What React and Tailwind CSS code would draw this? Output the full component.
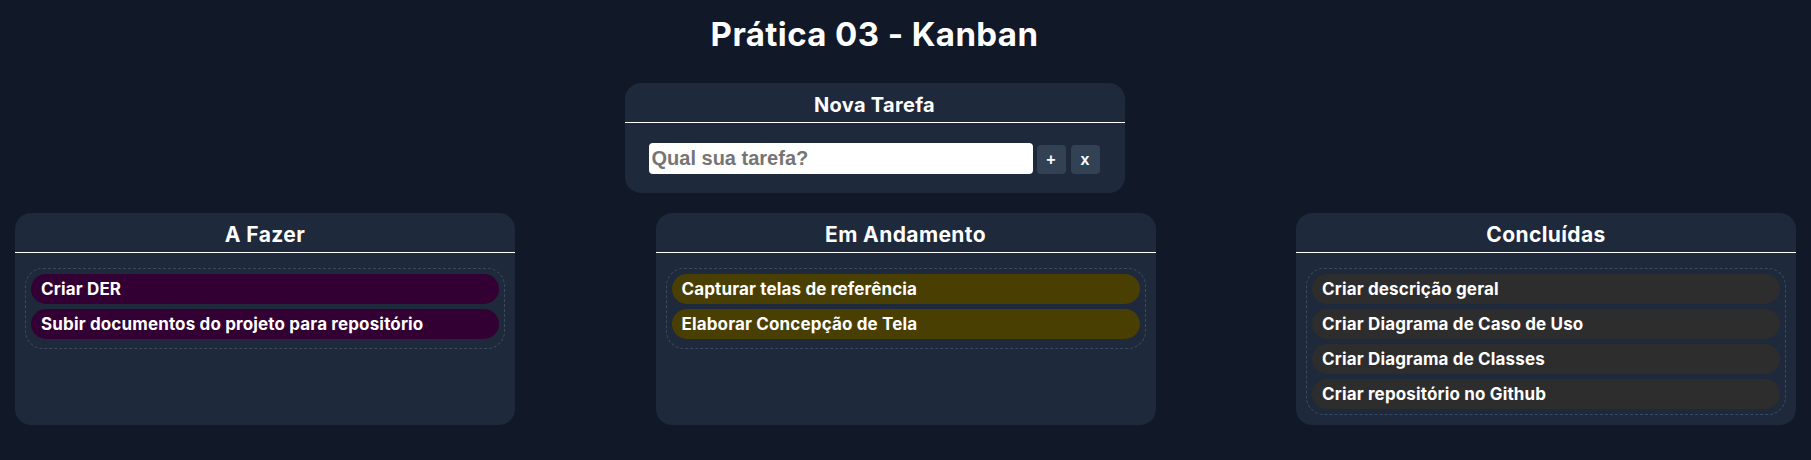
export default function App() {
  const columns = [
    {
      title: "A Fazer",
      color: "bg-[#330033]",
      items: ["Criar DER", "Subir documentos do projeto para repositório"],
    },
    {
      title: "Em Andamento",
      color: "bg-[#4a3f03]",
      items: ["Capturar telas de referência", "Elaborar Concepção de Tela"],
    },
    {
      title: "Concluídas",
      color: "bg-[#2d2d2d]",
      items: [
        "Criar descrição geral",
        "Criar Diagrama de Caso de Uso",
        "Criar Diagrama de Classes",
        "Criar repositório no Github",
      ],
    },
  ];

  return (
    <div className="min-h-screen bg-[#111827] font-['Inter',sans-serif] text-white">
      <div className="flex flex-col items-center pr-[62px]">
        <h1 className="mt-[14px] text-[33px] font-bold leading-[40px] tracking-[0.4px]">Prática 03 - Kanban</h1>
        <div className="mt-[29px] flex h-[110px] w-[500px] flex-col rounded-[16px] bg-[#1e293b]">
          <div className="flex h-[40px] items-center justify-center border-b border-white pt-[5px] text-[20px] font-bold tracking-[0.3px]">
            Nova Tarefa
          </div>
          <div className="mt-[20px] flex items-start px-[24px]">
            <input
              className="h-[31px] w-[384px] rounded-[4px] bg-white px-[3px] font-['Liberation_Sans',Arial,sans-serif] text-[20px] font-bold text-black outline-none placeholder:text-[#757575]"
              placeholder="Qual sua tarefa?"
            />
            <button className="ml-[4px] mt-[2px] flex h-[29px] w-[29px] items-center justify-center rounded-[4px] bg-[#334155] font-['Liberation_Sans',Arial,sans-serif] text-[16px] font-bold text-white">
              +
            </button>
            <button className="ml-[5px] mt-[2px] flex h-[29px] w-[29px] items-center justify-center rounded-[4px] bg-[#334155] font-['Liberation_Sans',Arial,sans-serif] text-[16px] font-bold text-white">
              x
            </button>
          </div>
        </div>
      </div>
      <div className="mt-[20px] flex justify-between px-[15px]">
        {columns.map((col) => (
          <div key={col.title} className="w-[500px] rounded-[16px] bg-[#1e293b] pb-[10px]">
            <div className="flex h-[40px] items-center justify-center border-b border-white pt-[4px] text-[21px] font-bold tracking-[0.4px]">
              {col.title}
            </div>
            <div className="mx-[10px] mt-[15px] flex min-h-[81px] flex-col gap-[5px] rounded-[18px] border border-dashed border-[#3b4a61] p-[5px]">
              {col.items.map((item) => (
                <div
                  key={item}
                  className={`flex h-[30px] items-center rounded-full px-[10px] pt-[1px] text-[17px] font-bold tracking-[0.15px] ${col.color}`}
                >
                  {item}
                </div>
              ))}
            </div>
          </div>
        ))}
      </div>
    </div>
  );
}
